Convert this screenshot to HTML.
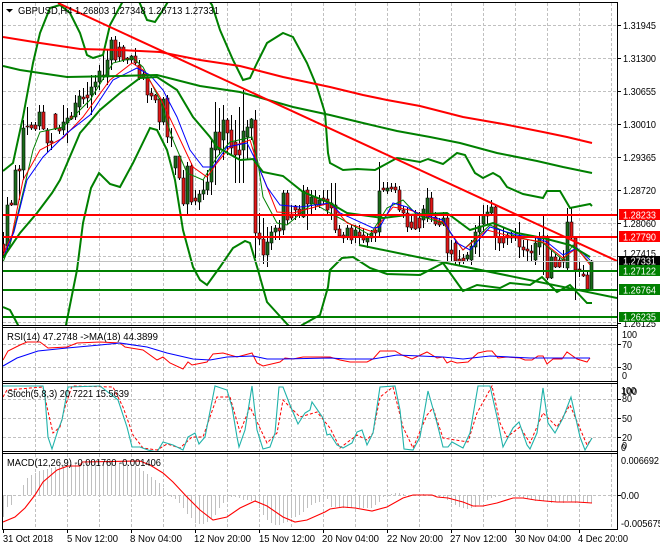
<!DOCTYPE html>
<html><head><meta charset="utf-8"><style>html,body{margin:0;padding:0;background:#fff}svg{display:block}text{font-family:"Liberation Sans",sans-serif;font-size:10.2px;fill:#000}</style></head><body>
<svg width="660" height="550" viewBox="0 0 660 550" xmlns="http://www.w3.org/2000/svg">
<defs>
<clipPath id="m"><rect x="3" y="3" width="614" height="322"/></clipPath>
<clipPath id="r"><rect x="3" y="328" width="614" height="53"/></clipPath>
<clipPath id="s"><rect x="3" y="384" width="614" height="67"/></clipPath>
<clipPath id="d"><rect x="3" y="454" width="614" height="75"/></clipPath>
</defs>
<rect width="660" height="550" fill="#fff"/>
<!-- grid -->
<path fill="none" stroke="#c0c0c0" stroke-dasharray="3 2" d="M3 25.5H617M3 58.5H617M3 91.5H617M3 124.5H617M3 157.5H617M3 190.5H617M3 223.5H617M3 256.5H617M3 289.5H617M3 322.5H617M3 344.5H617M3 367.5H617M3 399.5H617M3 418.5H617M3 437.5H617M3 495.5H617
M35.5 3V325M67.5 3V325M99.5 3V325M131.5 3V325M163.5 3V325M195.5 3V325M227.5 3V325M259.5 3V325M291.5 3V325M323.5 3V325M355.5 3V325M387.5 3V325M419.5 3V325M451.5 3V325M483.5 3V325M515.5 3V325M547.5 3V325M579.5 3V325M611.5 3V325
M35.5 328V381M67.5 328V381M99.5 328V381M131.5 328V381M163.5 328V381M195.5 328V381M227.5 328V381M259.5 328V381M291.5 328V381M323.5 328V381M355.5 328V381M387.5 328V381M419.5 328V381M451.5 328V381M483.5 328V381M515.5 328V381M547.5 328V381M579.5 328V381M611.5 328V381
M35.5 384V451M67.5 384V451M99.5 384V451M131.5 384V451M163.5 384V451M195.5 384V451M227.5 384V451M259.5 384V451M291.5 384V451M323.5 384V451M355.5 384V451M387.5 384V451M419.5 384V451M451.5 384V451M483.5 384V451M515.5 384V451M547.5 384V451M579.5 384V451M611.5 384V451
M35.5 454V529M67.5 454V529M99.5 454V529M131.5 454V529M163.5 454V529M195.5 454V529M227.5 454V529M259.5 454V529M291.5 454V529M323.5 454V529M355.5 454V529M387.5 454V529M419.5 454V529M451.5 454V529M483.5 454V529M515.5 454V529M547.5 454V529M579.5 454V529M611.5 454V529"/>
<g clip-path="url(#m)">
<path stroke="#000" stroke-width="1" fill="none" d="M3.5 232V257M7.5 197V252M11.5 200V206M15.5 165V205M19.5 165V200M23.5 120V180M27.5 107V135M31.5 122V130M35.5 122V131M39.5 105V130M43.5 105V130M47.5 128V152M51.5 133V150M55.5 113V130M59.5 125V134M63.5 105V135M67.5 108V143M71.5 112V120M75.5 95V120M79.5 90V115M83.5 88V104M87.5 82V108M91.5 75V115M95.5 75V95M99.5 65V90M103.5 55V80M107.5 50V85M111.5 37V70M115.5 36V62M119.5 42V62M123.5 45V62M127.5 57V64M131.5 55V63M135.5 48V65M139.5 60V80M143.5 70V80M147.5 76V103M151.5 88V100M155.5 94V103M159.5 98V130M163.5 97V125M167.5 95V143M171.5 128V147M175.5 156V175M179.5 155V180M183.5 170V206M187.5 162V214M191.5 163V205M195.5 190V205M199.5 190V210M203.5 180V200M207.5 170V195M211.5 138V195M215.5 102V185M219.5 108V155M223.5 105V160M227.5 118V155M231.5 115V155M235.5 120V183M239.5 107V183M243.5 90V183M247.5 120V160M251.5 118V140M255.5 110V258M259.5 213V245M263.5 218V264M267.5 227V267M271.5 226V250M275.5 225V240M279.5 220V240M283.5 190V235M287.5 190V225M291.5 205V220M295.5 205V220M299.5 205V218M303.5 185V218M307.5 187V230M311.5 190V215M315.5 190V210M319.5 195V208M323.5 190V205M327.5 190V215M331.5 183V220M335.5 183V233M339.5 225V238M343.5 232V243M347.5 225V240M351.5 225V244M355.5 225V243M359.5 225V245M363.5 228V243M367.5 233V248M371.5 230V242M375.5 228V242M379.5 162V236M383.5 182V192M387.5 182V194M391.5 183V192M395.5 183V193M399.5 186V212M403.5 206V218M407.5 207V232M411.5 216V230M415.5 210V230M419.5 212V232M423.5 205V228M427.5 188V222M431.5 192V222M435.5 212V226M439.5 218V227M443.5 212V226M447.5 215V262M451.5 240V262M455.5 240V264M459.5 250V265M463.5 254V264M467.5 252V262M471.5 240V265M475.5 225V254M479.5 215V257M483.5 205V232M487.5 205V225M491.5 200V215M495.5 204V250M499.5 230V251M503.5 228V248M507.5 232V245M511.5 232V243M515.5 228V241M519.5 222V258M523.5 240V257M527.5 240V261M531.5 245V262M535.5 238V265M539.5 232V255M543.5 215V275M547.5 235V280M551.5 250V279M555.5 254V268M559.5 257V268M563.5 250V268M567.5 208V270M571.5 207V240M575.5 237V300M579.5 262V277M583.5 265V277M587.5 272V290M591.5 260V291"/>
<path stroke="#000" stroke-width=".6" fill="#1a6b1a" d="M6 205h3V246h-3zM14 170h3V205h-3zM22 128h3V170h-3zM38 112h3V126h-3zM62 122h3V130h-3zM66 118h3V123h-3zM74 103h3V117h-3zM78 96h3V107h-3zM90 87h3V95h-3zM94 82h3V87h-3zM98 71h3V82h-3zM106 60h3V77h-3zM110 40h3V60h-3zM130 56h3V60h-3zM162 99h3V122h-3zM174 156h3V168h-3zM186 166h3V204h-3zM198 194h3V202h-3zM202 190h3V194h-3zM206 182h3V190h-3zM210 148h3V182h-3zM214 132h3V150h-3zM222 120h3V140h-3zM242 131h3V150h-3zM246 127h3V137h-3zM250 119h3V128h-3zM266 242h3V255h-3zM270 232h3V243h-3zM274 228h3V232h-3zM282 193h3V230h-3zM302 191h3V217h-3zM310 197h3V204h-3zM318 200h3V205h-3zM346 228h3V237h-3zM354 230h3V237h-3zM366 237h3V242h-3zM370 233h3V238h-3zM378 191h3V232h-3zM386 188h3V191h-3zM422 209h3V220h-3zM426 198h3V218h-3zM442 218h3V224h-3zM466 255h3V259h-3zM470 246h3V260h-3zM474 232h3V247h-3zM478 226h3V232h-3zM482 215h3V224h-3zM486 212h3V216h-3zM490 207h3V213h-3zM534 243h3V260h-3zM538 237h3V247h-3zM550 257h3V278h-3zM566 222h3V268h-3zM590 261h3V290h-3z"/>
<path stroke="#000" stroke-width=".6" fill="#e01818" d="M2 244h3V252h-3zM10 203h3V205h-3zM18 169h3V171h-3zM26 126h3V127h-3zM30 125h3V128h-3zM34 125h3V129h-3zM42 112h3V129h-3zM46 130h3V143h-3zM50 141h3V143h-3zM54 114h3V129h-3zM58 128h3V131h-3zM70 116h3V119h-3zM82 97h3V99h-3zM86 95h3V98h-3zM102 75h3V77h-3zM114 40h3V60h-3zM118 47h3V57h-3zM122 47h3V60h-3zM126 58h3V60h-3zM134 56h3V63h-3zM138 65h3V78h-3zM142 74h3V78h-3zM146 78h3V95h-3zM150 93h3V96h-3zM154 95h3V100h-3zM158 99h3V122h-3zM166 98h3V137h-3zM170 137h3V138h-3zM178 156h3V178h-3zM182 178h3V204h-3zM190 166h3V202h-3zM194 198h3V201h-3zM218 132h3V150h-3zM226 120h3V133h-3zM230 130h3V148h-3zM234 142h3V155h-3zM238 150h3V155h-3zM254 120h3V233h-3zM258 233h3V239h-3zM262 239h3V255h-3zM278 228h3V231h-3zM286 193h3V220h-3zM290 215h3V218h-3zM294 206h3V210h-3zM298 209h3V214h-3zM306 190h3V204h-3zM314 197h3V205h-3zM322 198h3V201h-3zM326 199h3V210h-3zM330 203h3V208h-3zM334 205h3V230h-3zM338 229h3V236h-3zM342 235h3V238h-3zM350 228h3V240h-3zM358 232h3V236h-3zM362 235h3V240h-3zM374 230h3V233h-3zM382 188h3V190h-3zM390 187h3V189h-3zM394 187h3V190h-3zM398 190h3V210h-3zM402 210h3V213h-3zM406 213h3V227h-3zM410 222h3V228h-3zM414 215h3V229h-3zM418 218h3V228h-3zM430 198h3V215h-3zM434 217h3V224h-3zM438 222h3V225h-3zM446 218h3V253h-3zM450 250h3V254h-3zM454 243h3V261h-3zM458 259h3V262h-3zM462 258h3V261h-3zM494 207h3V237h-3zM498 237h3V243h-3zM502 237h3V243h-3zM506 235h3V238h-3zM510 236h3V238h-3zM514 236h3V238h-3zM518 236h3V247h-3zM522 247h3V250h-3zM526 249h3V251h-3zM530 251h3V253h-3zM542 236h3V238h-3zM546 237h3V278h-3zM554 257h3V267h-3zM558 260h3V267h-3zM562 259h3V262h-3zM570 222h3V238h-3zM574 238h3V270h-3zM578 269h3V270h-3zM582 274h3V276h-3zM586 275h3V289h-3z"/>
<!-- thin MAs -->
<g fill="none" stroke-width="1">
<path stroke="#008000" d="M3 262L10 245L20 205L33 150L40 132L63 127L90 100L113 63L133 58L143 67L160 100L173 140L187 173L203 180L217 157L230 142L252 137L258 163L263 197L277 223L287 225L313 203L330 213L343 220L370 235L387 208L403 200L417 215L443 223L463 250L490 225L517 237L543 243L563 260L573 245L590 263"/>
<path stroke="#f00" d="M3 255L12 235L23 180L40 150L63 138L83 117L110 80L132 63L143 70L160 97L177 133L193 167L207 177L217 163L230 147L250 140L257 163L267 187L277 212L293 213L330 203L347 223L373 232L393 207L410 210L443 222L463 250L487 230L517 238L543 242L563 258L577 248L590 265"/>
<path stroke="#00f" d="M3 258L14 232L27 180L43 157L67 133L90 115L113 80L137 68L150 75L163 90L177 117L190 150L203 167L213 167L227 147L247 143L257 163L267 187L280 205L300 207L330 203L340 213L373 228L380 227L393 203L407 207L417 213L443 220L457 243L470 250L490 227L517 235L537 238L547 242L563 255L577 248L590 260"/>
</g>
<!-- big lines -->
<g fill="none" stroke-width="2">
<path stroke="#008000" d="M3 171L13 163L23 117L33 63L40 33L50 8L60 5L70 13L80 33L87 55L93 58L103 55L110 25L123 1L135 -8L147 20L155 22L163 10L172 -5L205 -5L212 5L220 30L233 60L243 80L250 78L257 63L267 43L283 33L293 37L307 63L317 87L325 113L328 153L330 163L343 170L357 169L375 170L397 158L420 162L428 159L443 164L457 153L465 155L475 173L483 178L493 173L500 177L507 187L523 194L543 198L547 191L560 191L570 208L590 204L592 206"/>
<path stroke="#008000" d="M3 307L10 310L18 325L20 335M64 335L66 325L77 270L83 223L91 188L99 173L110 184L120 187L133 163L150 128L157 130L167 150L175 180L183 230L193 267L200 280L207 285L220 267L233 248L245 241L250 243L258 270L267 302L277 313L288 325L295 332M295 332L302 325L320 315L328 287L330 270L342 258L353 257L370 268L387 274L420 275L443 263L463 291L477 285L500 288L510 283L530 285L542 277L557 292L570 285L587 303L592 303"/>
<path stroke="#008000" d="M3 258L20 233L37 213L52 193L60 180L80 133L100 110L120 93L140 78L157 77L177 90L193 117L210 137L217 147L240 160L253 159L263 172L283 176L303 192L330 203L347 213L383 218L407 215L447 213L470 230L493 223L517 233L543 238L570 245L590 257"/>
<path stroke="#008000" d="M3 66L20 70L67 77L120 76L157 75L200 86L240 92L293 107L330 115L363 123L397 131L430 137L460 143L497 153L537 161L563 167L592 173"/>
<path stroke="#f00" d="M3 37L40 43L80 49L120 50L160 52L200 60L240 66L283 77L330 87L363 95L387 100L420 106L463 117L503 124L543 132L567 137L592 143"/>
<path stroke="#f00" d="M58 3L617 261"/>
<path stroke="#008000" d="M359 245L617 298"/>
</g>
<path stroke="#c0c0c0" d="M3 261.5H617"/>
<path stroke-width="2" stroke="#f00" d="M3 215H617M3 237H617"/>
<path stroke-width="2" stroke="#008000" d="M3 271H617M3 290H617M3 317H617"/>
</g>
<!-- RSI -->
<g clip-path="url(#r)" fill="none" stroke-width="1">
<path stroke="#f00" d="M3 360L8 351L20 345L27 342L40 342L48 348L67 347L77 343L100 342L120 343L125 347L143 350L157 360L163 357L170 363L183 369L188 362L192 365L207 362L213 354L223 353L237 357L252 353L257 363L263 366L280 362L285 358L293 359L303 357L327 357L330 357L340 360L350 362L367 362L373 359L380 351L395 351L402 355L412 359L427 352L437 358L443 357L447 363L451 361L457 363L468 362L478 353L487 351L492 351L498 358L507 357L520 358L525 360L532 360L538 356L543 356L547 364L553 359L562 359L567 352L577 359L587 362L590 358"/>
<path stroke="#00f" stroke-width="1.1" d="M3 366L17 358L38 351L67 348L100 345L120 343L147 347L167 353L193 359L210 360L227 357L253 356L267 359L283 359L330 358L347 359L373 359L397 355L443 357L463 359L490 356L530 358L590 358"/>
</g>
<!-- Stoch -->
<g clip-path="url(#s)" fill="none" stroke-width="1">
<path stroke="#f00" stroke-dasharray="3 2" d="M3 397L7 390L43 387L47 407L53 433L60 427L65 407L72 386L113 387L123 407L133 435L143 448L157 450L167 444L180 448L192 437L203 437L217 397L230 397L240 432L250 407L267 443L277 433L283 400L300 417L317 412L330 428L340 448L357 435L367 440L373 433L380 397L393 387L403 427L413 448L427 415L433 408L443 438L468 442L477 413L492 386L500 423L507 437L520 427L530 443L543 413L557 427L570 405L587 445L592 438"/>
<path stroke="#20b2aa" stroke-width="1.1" d="M3 386L43 386L45 397L48 437L52 449L58 430L62 420L68 387L100 386L118 400L127 427L132 447L140 447L148 450L157 452L163 442L173 445L183 450L188 437L195 433L199 444L205 437L215 386L227 390L232 407L237 437L239 447L245 430L252 386L257 430L263 449L270 447L275 433L279 387L283 387L290 405L298 424L305 413L310 410L312 402L323 418L327 435L330 434L337 445L343 448L352 443L357 432L362 430L367 445L373 433L380 387L395 386L400 410L404 449L413 450L420 437L428 391L437 423L443 447L448 447L452 442L463 448L470 433L478 386L490 386L497 417L503 447L513 428L519 422L527 445L530 449L537 433L543 388L548 423L555 433L563 418L571 397L580 437L585 450L592 438"/>
</g>
<!-- MACD -->
<g clip-path="url(#d)" fill="none">
<path stroke="#c0c0c0" d="M3.5 495V517M7.5 495V507M11.5 495V505M15.5 495V496M23.5 495V485M27.5 495V478M31.5 495V475M35.5 495V473M39.5 495V471M43.5 495V470M47.5 495V469M51.5 495V468M55.5 495V467M59.5 495V466M63.5 495V465M67.5 495V465M71.5 495V464M75.5 495V464M79.5 495V463M83.5 495V463M87.5 495V463M91.5 495V462M95.5 495V462M99.5 495V462M103.5 495V462M107.5 495V462M111.5 495V462M115.5 495V462M119.5 495V463M123.5 495V463M127.5 495V464M131.5 495V465M135.5 495V466M139.5 495V468M143.5 495V471M147.5 495V474M151.5 495V477M155.5 495V480M159.5 495V483M163.5 495V488M167.5 495V493M171.5 495V497M175.5 495V499M179.5 495V503M183.5 495V508M187.5 495V514M191.5 495V518M195.5 495V523M199.5 495V524M203.5 495V524M207.5 495V522M211.5 495V518M215.5 495V515M219.5 495V508M223.5 495V503M227.5 495V499M231.5 495V497M235.5 495V497M239.5 495V498M243.5 495V500M247.5 495V500M251.5 495V501M255.5 495V502M259.5 495V508M263.5 495V515M267.5 495V520M271.5 495V523M275.5 495V525M279.5 495V525M283.5 495V523M287.5 495V522M291.5 495V518M295.5 495V517M299.5 495V515M303.5 495V512M307.5 495V508M311.5 495V505M315.5 495V503M319.5 495V502M323.5 495V500M327.5 495V499M331.5 495V507M335.5 495V507M339.5 495V508M343.5 495V508M347.5 495V508M351.5 495V508M355.5 495V508M359.5 495V508M363.5 495V508M367.5 495V508M371.5 495V508M375.5 495V505M379.5 495V502M383.5 495V497M387.5 495V495M391.5 495V494M395.5 495V493M399.5 495V493M403.5 495V494M407.5 495V495M411.5 495V496M415.5 495V496M419.5 495V495M423.5 495V494M427.5 495V495M431.5 495V496M435.5 495V496M439.5 495V497M443.5 495V498M447.5 495V500M451.5 495V503M455.5 495V505M459.5 495V507M463.5 495V508M467.5 495V509M471.5 495V508M475.5 495V507M479.5 495V505M483.5 495V502M487.5 495V500M491.5 495V498M495.5 495V497M499.5 495V496M503.5 495V496M507.5 495V495M511.5 495V494M515.5 495V496M519.5 495V497M523.5 495V498M527.5 495V499M531.5 495V500M535.5 495V501M539.5 495V500M543.5 495V501M547.5 495V502M551.5 495V503M555.5 495V502M559.5 495V502M563.5 495V503M567.5 495V501M571.5 495V502M575.5 495V503M579.5 495V503M583.5 495V503M587.5 495V503M591.5 495V503"/>
<path stroke="#f00" stroke-width="1.1" d="M3 522L15 517L25 508L35 495L43 482L57 470L68 466L80 466L82 462L140 461L150 465L163 473L173 482L187 497L200 510L213 520L227 517L240 508L255 501L267 506L283 517L295 522L307 520L325 512L330 509L343 507L355 508L372 511L387 507L403 498L413 495L432 495L437 497L448 498L463 502L473 506L483 506L497 503L513 498L523 498L535 500L545 501L557 502L577 502L592 503"/>
</g>
<!-- borders -->
<path fill="none" stroke="#000" d="M2.5 2.5H617.5V529.5H2.5ZM3 325.5H617M3 327.5H617M3 381.5H617M3 383.5H617M3 451.5H617M3 453.5H617"/>
<path fill="none" stroke="#000" d="M617 25.5h4M617 58.5h4M617 91.5h4M617 124.5h4M617 157.5h4M617 190.5h4M617 223.5h4M617 256.5h4M617 323.5h4M617 344.5h4M617 367.5h4M617 399.5h4M617 418.5h4M617 437.5h4M617 495.5h4M3.5 529v4M67.5 529v4M131.5 529v4M195.5 529v4M259.5 529v4M323.5 529v4M387.5 529v4M451.5 529v4M515.5 529v4M579.5 529v4"/>
<path d="M6 9h7l-3.5 3.5z" fill="#000"/>
<!-- panel titles -->
<text x="18" y="14" textLength="201" lengthAdjust="spacingAndGlyphs">GBPUSD,H4  1.26803 1.27348 1.26713 1.27331</text>
<text x="7" y="340" textLength="151" lengthAdjust="spacingAndGlyphs">RSI(14) 47.2748  -&gt;MA(18) 44.3899</text>
<text x="7" y="397" textLength="122" lengthAdjust="spacingAndGlyphs">Stoch(5,8,3) 20.7221 15.5639</text>
<text x="7" y="466" textLength="154" lengthAdjust="spacingAndGlyphs">MACD(12,26,9) -0.001760 -0.001406</text>
<!-- right axis labels -->
<g lengthAdjust="spacingAndGlyphs">
<text x="623" y="29" textLength="33" lengthAdjust="spacingAndGlyphs">1.31945</text>
<text x="623" y="62" textLength="33" lengthAdjust="spacingAndGlyphs">1.31300</text>
<text x="623" y="95" textLength="33" lengthAdjust="spacingAndGlyphs">1.30655</text>
<text x="623" y="128" textLength="33" lengthAdjust="spacingAndGlyphs">1.30010</text>
<text x="623" y="161" textLength="33" lengthAdjust="spacingAndGlyphs">1.29365</text>
<text x="623" y="194" textLength="33" lengthAdjust="spacingAndGlyphs">1.28720</text>
<text x="623" y="227" textLength="33" lengthAdjust="spacingAndGlyphs">1.28060</text>
<text x="623" y="257" textLength="33" lengthAdjust="spacingAndGlyphs">1.27415</text>
<text x="623" y="327" textLength="33" lengthAdjust="spacingAndGlyphs">1.26125</text>
<rect x="619" y="209" width="41" height="11" fill="#f00"/><text x="623" y="218.5" textLength="33" lengthAdjust="spacingAndGlyphs" style="fill:#fff">1.28233</text>
<rect x="619" y="231" width="41" height="11" fill="#f00"/><text x="623" y="240.5" textLength="33" lengthAdjust="spacingAndGlyphs" style="fill:#fff">1.27790</text>
<rect x="619" y="256" width="41" height="10" fill="#000"/><text x="623" y="264.5" textLength="33" lengthAdjust="spacingAndGlyphs" style="fill:#fff">1.27331</text>
<rect x="619" y="265" width="41" height="11" fill="#008000"/><text x="623" y="274.5" textLength="33" lengthAdjust="spacingAndGlyphs" style="fill:#fff">1.27122</text>
<rect x="619" y="284" width="41" height="11" fill="#008000"/><text x="623" y="293.5" textLength="33" lengthAdjust="spacingAndGlyphs" style="fill:#fff">1.26764</text>
<rect x="619" y="312" width="41" height="10" fill="#008000"/><text x="623" y="320.5" textLength="33" lengthAdjust="spacingAndGlyphs" style="fill:#fff">1.26235</text>
<text x="622" y="338" textLength="15" lengthAdjust="spacingAndGlyphs">100</text>
<text x="622" y="348" textLength="10" lengthAdjust="spacingAndGlyphs">70</text>
<text x="622" y="370" textLength="10" lengthAdjust="spacingAndGlyphs">30</text>
<text x="622" y="379" textLength="5" lengthAdjust="spacingAndGlyphs">0</text>
<text x="621" y="394" textLength="15" lengthAdjust="spacingAndGlyphs">100</text>
<text x="622" y="395" textLength="15" lengthAdjust="spacingAndGlyphs">100</text>
<text x="622" y="402" textLength="10" lengthAdjust="spacingAndGlyphs">80</text>
<text x="622" y="422" textLength="10" lengthAdjust="spacingAndGlyphs">50</text>
<text x="622" y="441" textLength="10" lengthAdjust="spacingAndGlyphs">20</text>
<text x="622" y="449" textLength="5" lengthAdjust="spacingAndGlyphs">0</text>
<text x="621" y="451" textLength="5" lengthAdjust="spacingAndGlyphs">0</text>
<text x="621" y="464" textLength="38" lengthAdjust="spacingAndGlyphs">0.006692</text>
<text x="621" y="499" textLength="18" lengthAdjust="spacingAndGlyphs">0.00</text>
<text x="621" y="527" textLength="42" lengthAdjust="spacingAndGlyphs">-0.005675</text>
</g>
<!-- time labels -->
<g>
<text x="3" y="542" textLength="50" lengthAdjust="spacingAndGlyphs">31 Oct 2018</text>
<text x="67" y="542" textLength="51" lengthAdjust="spacingAndGlyphs">5 Nov 12:00</text>
<text x="130" y="542" textLength="52" lengthAdjust="spacingAndGlyphs">8 Nov 04:00</text>
<text x="194" y="542" textLength="57" lengthAdjust="spacingAndGlyphs">12 Nov 20:00</text>
<text x="259" y="542" textLength="56" lengthAdjust="spacingAndGlyphs">15 Nov 12:00</text>
<text x="322" y="542" textLength="57" lengthAdjust="spacingAndGlyphs">20 Nov 04:00</text>
<text x="387" y="542" textLength="56" lengthAdjust="spacingAndGlyphs">22 Nov 20:00</text>
<text x="450" y="542" textLength="57" lengthAdjust="spacingAndGlyphs">27 Nov 12:00</text>
<text x="515" y="542" textLength="56" lengthAdjust="spacingAndGlyphs">30 Nov 04:00</text>
<text x="578" y="542" textLength="50" lengthAdjust="spacingAndGlyphs">4 Dec 20:00</text>
</g>
</svg>
</body></html>
